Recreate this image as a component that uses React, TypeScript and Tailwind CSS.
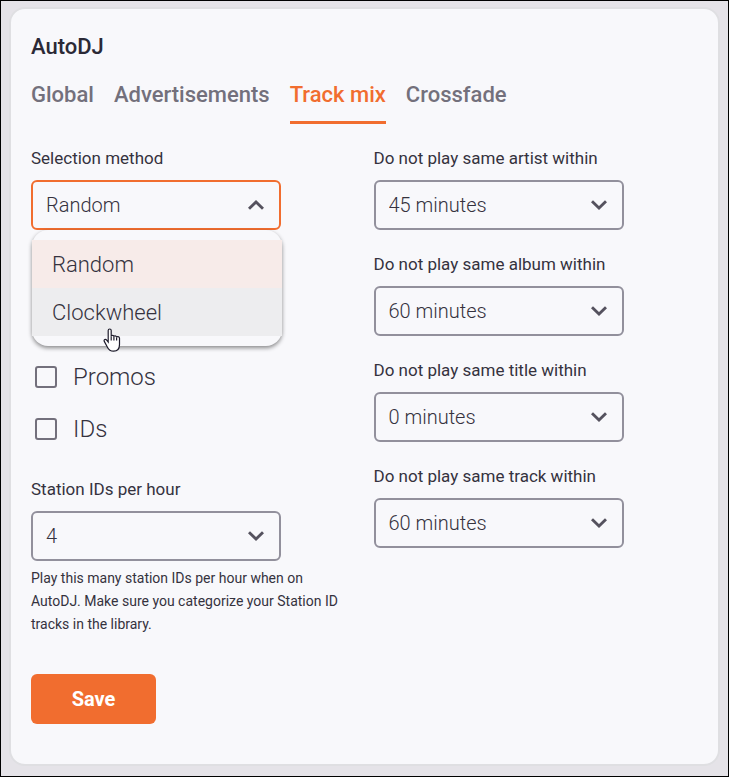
import { useState } from "react"

interface SelectFieldProps {
  id: string
  label: string
  options: string[]
  initial: string
}

const intervals = ["0 minutes", "15 minutes", "30 minutes", "45 minutes", "60 minutes", "90 minutes"]

const limits = [
  { id: "artist", label: "Do not play same artist within", value: "45 minutes" },
  { id: "album", label: "Do not play same album within", value: "60 minutes" },
  { id: "title", label: "Do not play same title within", value: "0 minutes" },
  { id: "track", label: "Do not play same track within", value: "60 minutes" },
]

const tabs = ["Global", "Advertisements", "Track mix", "Crossfade"]

function Chevron({ up = false }: { up?: boolean }) {
  return (
    <svg
      viewBox="0 0 16 10"
      fill="none"
      stroke="#55525e"
      strokeWidth="2.9"
      className="pointer-events-none col-start-1 row-start-1 mr-[17px] h-[10px] w-4 self-center justify-self-end"
    >
      <path d={up ? "M1 8.700 8 2 15 8.700" : "M1 1.300 8 8 15 1.300"} />
    </svg>
  )
}

function SelectField({ id, label, options, initial }: SelectFieldProps) {
  const [value, setValue] = useState(initial)

  return (
    <div className="flex flex-col gap-[10px]">
      <label htmlFor={id} className="text-[17px] leading-6">
        {label}
      </label>
      <div className="grid w-[250px] max-w-full">
        <select
          id={id}
          value={value}
          onChange={(e) => setValue(e.target.value)}
          className="col-start-1 row-start-1 h-[50px] appearance-none rounded-md border-2 border-[#92909c] bg-transparent px-[13px] text-xl font-light"
        >
          {options.map((option) => (
            <option key={option}>{option}</option>
          ))}
        </select>
        <Chevron />
      </div>
    </div>
  )
}

function CategoryCheckbox({ label }: { label: string }) {
  return (
    <label className="flex h-[52px] items-center gap-4 pl-1 text-2xl font-light">
      <input
        type="checkbox"
        className="size-[22px] appearance-none rounded-[3px] border-2 border-[#73707c] checked:bg-[#f16d2f]"
      />
      {label}
    </label>
  )
}

function HandCursor() {
  return (
    <svg viewBox="0 0 18 24" className="pointer-events-none absolute top-[98px] left-[71px] h-6 w-[18px]">
      <path
        d="M5.2 2.5c0-2 3-2 3 0v6c0-1.600 2.700-1.400 2.700.3 0-1.300 2.700-1.200 2.700.6 0-1.300 2.900-1.100 2.900.9v6.200c0 4.400-2 6.700-5.900 6.700-3.300 0-5-1.500-6.300-4.300L1.300 13.400c-.8-1.700 1.200-2.700 2.400-1.300l1.500 1.900z"
        fill="#fff"
        stroke="#1d1b2b"
        strokeWidth="1.200"
      />
      <path d="M8.200 8.500v4M10.900 8.800v3.700M13.600 9.400v3.100" stroke="#1d1b2b" strokeWidth="1.200" />
    </svg>
  )
}

function SelectionMethod() {
  const [method, setMethod] = useState("Random")

  return (
    <div className="relative flex flex-col gap-[10px]">
      <label htmlFor="method" className="text-[17px] leading-6">
        Selection method
      </label>
      <div className="grid w-[250px] max-w-full">
        <button
          id="method"
          type="button"
          aria-haspopup="listbox"
          aria-expanded="true"
          className="col-start-1 row-start-1 h-[50px] rounded-md border-2 border-[#f16d2f] px-[13px] text-left text-xl font-light"
        >
          {method}
        </button>
        <Chevron up />
      </div>
      <div className="absolute top-full left-px w-[250px] rounded-2xl bg-[#f8f8fb] py-[10px] shadow-[0_2px_4px_rgba(0,0,0,0.45)]">
        <ul role="listbox" aria-label="Selection method" className="text-[22px] font-light text-[#35323e]">
          <li
            role="option"
            aria-selected={method === "Random"}
            onClick={() => setMethod("Random")}
            className="flex h-12 items-center bg-[#f7ebe9] px-5"
          >
            Random
          </li>
          <li
            role="option"
            aria-selected={method === "Clockwheel"}
            onClick={() => setMethod("Clockwheel")}
            className="flex h-12 items-center bg-[#ededef] px-5"
          >
            Clockwheel
          </li>
        </ul>
        <HandCursor />
      </div>
    </div>
  )
}

export default function App() {
  return (
    <div className="min-h-screen border border-black bg-[#e5e3e8] px-2 pt-[6px] pb-[10px] font-['Roboto','Liberation_Sans',sans-serif] text-[#35323e]">
      <main className="rounded-2xl border-2 border-[#dfdfe2] bg-[#f8f8fb] px-5 pt-[22px] pb-10">
        <h1 className="text-[22px] leading-8 font-medium text-[#2b2936]">AutoDJ</h1>

        <nav className="mt-3 flex gap-5 text-[22px] leading-8 font-medium text-[#73707c]">
          {tabs.map((tab) => (
            <a
              key={tab}
              href="#"
              className={
                tab === "Track mix"
                  ? "border-b-3 border-[#f16d2f] pt-1 pb-[10px] text-[#f16d2f]"
                  : "pt-1 pb-[10px]"
              }
            >
              {tab}
            </a>
          ))}
        </nav>

        <form className="mt-[22px]" onSubmit={(e) => e.preventDefault()}>
          <div className="grid grid-cols-2 gap-[18px]">
            <div>
              <SelectionMethod />
              <div className="mt-[121px] mb-[22px]">
                <CategoryCheckbox label="Promos" />
                <CategoryCheckbox label="IDs" />
              </div>
              <SelectField id="ids" label="Station IDs per hour" options={["1", "2", "3", "4", "5", "6"]} initial="4" />
              <p className="mt-[6px] text-sm leading-[23px]">
                Play this many station IDs per hour when on AutoDJ. Make sure you categorize your Station ID tracks in
                the library.
              </p>
            </div>

            <div className="flex flex-col gap-[22px]">
              {limits.map((limit) => (
                <SelectField
                  key={limit.id}
                  id={limit.id}
                  label={limit.label}
                  options={intervals}
                  initial={limit.value}
                />
              ))}
            </div>
          </div>

          <button type="submit" className="mt-[38px] h-[50px] w-[125px] rounded-md bg-[#f16d2f] text-xl font-bold text-white">
            Save
          </button>
        </form>
      </main>
    </div>
  )
}
